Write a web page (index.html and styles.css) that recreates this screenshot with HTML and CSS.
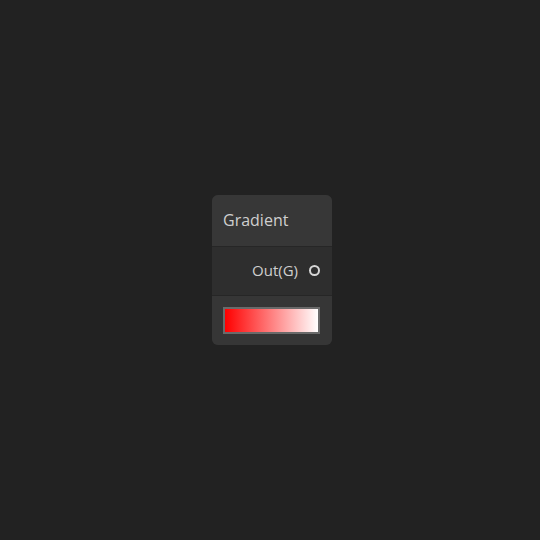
FILE: index.html
```html
<!DOCTYPE html>
<html lang="en">
<head>
  <meta charset="UTF-8">
  <title>Gradient Node</title>
  <link rel="stylesheet" href="styles.css">
</head>
<body>
  <div class="canvas">
    <div class="node">
      <div class="node-title">Gradient</div>
      <div class="node-port">
        <span class="port-label">Out(G)</span>
        <span class="port-dot"></span>
      </div>
      <div class="node-preview">
        <div class="gradient-bar"></div>
      </div>
    </div>
  </div>
</body>
</html>
```

FILE: styles.css
```css
* {
  margin: 0;
  padding: 0;
  box-sizing: border-box;
}

body {
  background-color: #222222;
  font-family: 'Open Sans', 'Noto Sans', sans-serif;
  width: 540px;
  height: 540px;
  overflow: hidden;
}

.canvas {
  height: 540px;
  padding-top: 195px;
  padding-left: 212px;
}

.node {
  width: 120px;
  border-radius: 6px;
  overflow: hidden;
  background-color: #2e2e2e;
}

.node-title {
  height: 52px;
  background-color: #373737;
  border-bottom: 1px solid #262626;
  color: #cfcfcf;
  font-size: 16px;
  padding-left: 11px;
  padding-bottom: 2px;
  display: flex;
  align-items: center;
}

.node-port {
  height: 49px;
  display: flex;
  align-items: center;
  justify-content: flex-end;
  gap: 11px;
  padding-right: 12px;
  padding-bottom: 2px;
  color: #cfcfcf;
  font-size: 15px;
  border-bottom: 1px solid #262626;
}

.port-dot {
  width: 11px;
  height: 11px;
  border: 2px solid #d6d6d6;
  border-radius: 50%;
}

.node-preview {
  height: 49px;
  background-color: #363636;
  padding: 11px 11px 0 11px;
}

.gradient-bar {
  width: 97px;
  height: 27px;
  border: 2px solid #6a6a6a;
  background: linear-gradient(to right, #ff0000, #ffffff);
}
```
